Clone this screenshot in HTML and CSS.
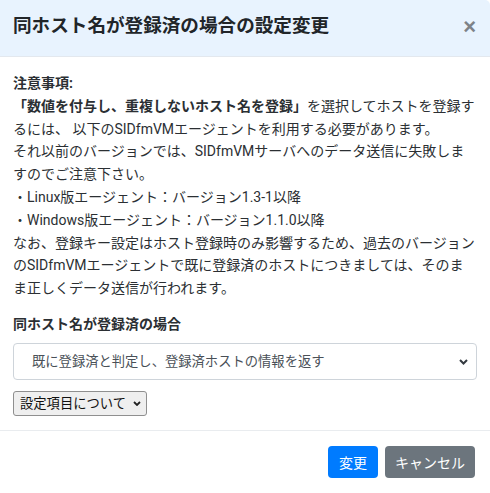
FILE: index.html
```html
<!DOCTYPE html>
<html lang="ja">
<head>
  <meta charset="UTF-8">
  <title>同ホスト名が登録済の場合の設定変更</title>
  <link rel="stylesheet" href="styles.css">
</head>
<body>
  <div class="modal-content">
    <div class="modal-header">
      <h5 class="modal-title">同ホスト名が登録済の場合の設定変更</h5>
      <button class="close" type="button">&times;</button>
    </div>

    <div class="modal-body">
      <div class="notes">
        <p><strong>注意事項:</strong></p>
        <p><strong>「数値を付与し、重複しないホスト名を登録」</strong>を選択してホストを登録するには、 以下のSIDfmVMエージェントを利用する必要があります。</p>
        <p>それ以前のバージョンでは、SIDfmVMサーバへのデータ送信に失敗しますのでご注意下さい。</p>
        <p>・Linux版エージェント：バージョン1.3-1以降</p>
        <p>・Windows版エージェント：バージョン1.1.0以降</p>
        <p>なお、登録キー設定はホスト登録時のみ影響するため、過去のバージョンのSIDfmVMエージェントで既に登録済のホストにつきましては、そのまま正しくデータ送信が行われます。</p>
      </div>

      <div class="field">
        <label class="field-label" for="dup">同ホスト名が登録済の場合</label>
        <div class="select-wrap">
          <select class="custom-select" id="dup">
            <option>既に登録済と判定し、登録済ホストの情報を返す</option>
            <option>数値を付与し、重複しないホスト名を登録</option>
          </select>
          <svg class="chevron" width="9" height="6" viewBox="0 0 9 6"><path d="M1 1l3.5 3.5L8 1" fill="none" stroke="#343a40" stroke-width="2"/></svg>
        </div>
      </div>

      <div class="help-wrap">
        <select class="help-select">
          <option>設定項目について</option>
        </select>
        <svg class="chevron small" width="8" height="5" viewBox="0 0 8 5"><path d="M1 1l3 3 3-3" fill="none" stroke="#222" stroke-width="1.8"/></svg>
      </div>
    </div>

    <div class="modal-footer">
      <button class="btn btn-primary" type="button">変更</button>
      <button class="btn btn-secondary" type="button">キャンセル</button>
    </div>
  </div>
</body>
</html>
```

FILE: styles.css
```css
* {
  box-sizing: border-box;
}

body {
  margin: 0;
  background-color: white;
  color: #2b2f33;
  font-family: Roboto, "Noto Sans CJK JP", sans-serif;
  font-size: 14px;
}

.modal-content {
  background-color: white;
  border-top-right-radius: 5px;
  overflow: hidden;
}

.modal-header {
  display: flex;
  align-items: center;
  justify-content: space-between;
  height: 57px;
  padding: 0 14px 3px 13px;
  background-color: #e8f3fe;
  border-bottom: 1px solid #e3e8ee;
}

.modal-title {
  margin: 0;
  font-size: 18.6px;
  font-weight: bold;
  line-height: 1.5;
  color: #212529;
}

.close {
  padding: 0;
  border: none;
  background: none;
  font-family: "Liberation Sans", sans-serif;
  font-size: 22px;
  font-weight: bold;
  line-height: 1;
  color: #7d8288;
  cursor: pointer;
}

.modal-body {
  padding: 15px 13px 14px;
}

.notes p {
  margin: 0;
  line-height: 22.8px;
}

.notes strong {
  font-weight: bold;
}

.field {
  margin-top: 13px;
}

.field-label {
  display: block;
  font-weight: bold;
  line-height: 22.8px;
  margin-bottom: 7px;
}

.select-wrap {
  position: relative;
}

.custom-select {
  display: block;
  width: 100%;
  height: 37px;
  padding: 0 30px 0 18px;
  font-family: inherit;
  font-size: 13.3px;
  color: #495057;
  background-color: white;
  border: 1px solid #ced4da;
  border-radius: 4px;
  appearance: none;
  -webkit-appearance: none;
}

.chevron {
  position: absolute;
  right: 9px;
  top: 16px;
  pointer-events: none;
}

.help-wrap {
  position: relative;
  display: inline-block;
  margin-top: 11px;
}

.help-select {
  display: block;
  height: 25px;
  padding: 0 19px 0 6px;
  font-family: inherit;
  font-size: 13.3px;
  color: #111;
  background-color: #efefef;
  border: 1px solid #8f8f8f;
  border-radius: 3px;
  appearance: none;
  -webkit-appearance: none;
}

.chevron.small {
  right: 6px;
  top: 10px;
}

.modal-footer {
  display: flex;
  justify-content: flex-end;
  gap: 7px;
  padding: 15px 15px;
  border-top: 1px solid #e9ecef;
}

.btn {
  height: 32px;
  padding: 0 11px;
  font-family: inherit;
  font-size: 14px;
  color: white;
  border: none;
  border-radius: 4px;
  cursor: pointer;
}

.btn-primary {
  background-color: #007bff;
}

.btn-secondary {
  padding: 0 10px;
  background-color: #6c757d;
}
```
